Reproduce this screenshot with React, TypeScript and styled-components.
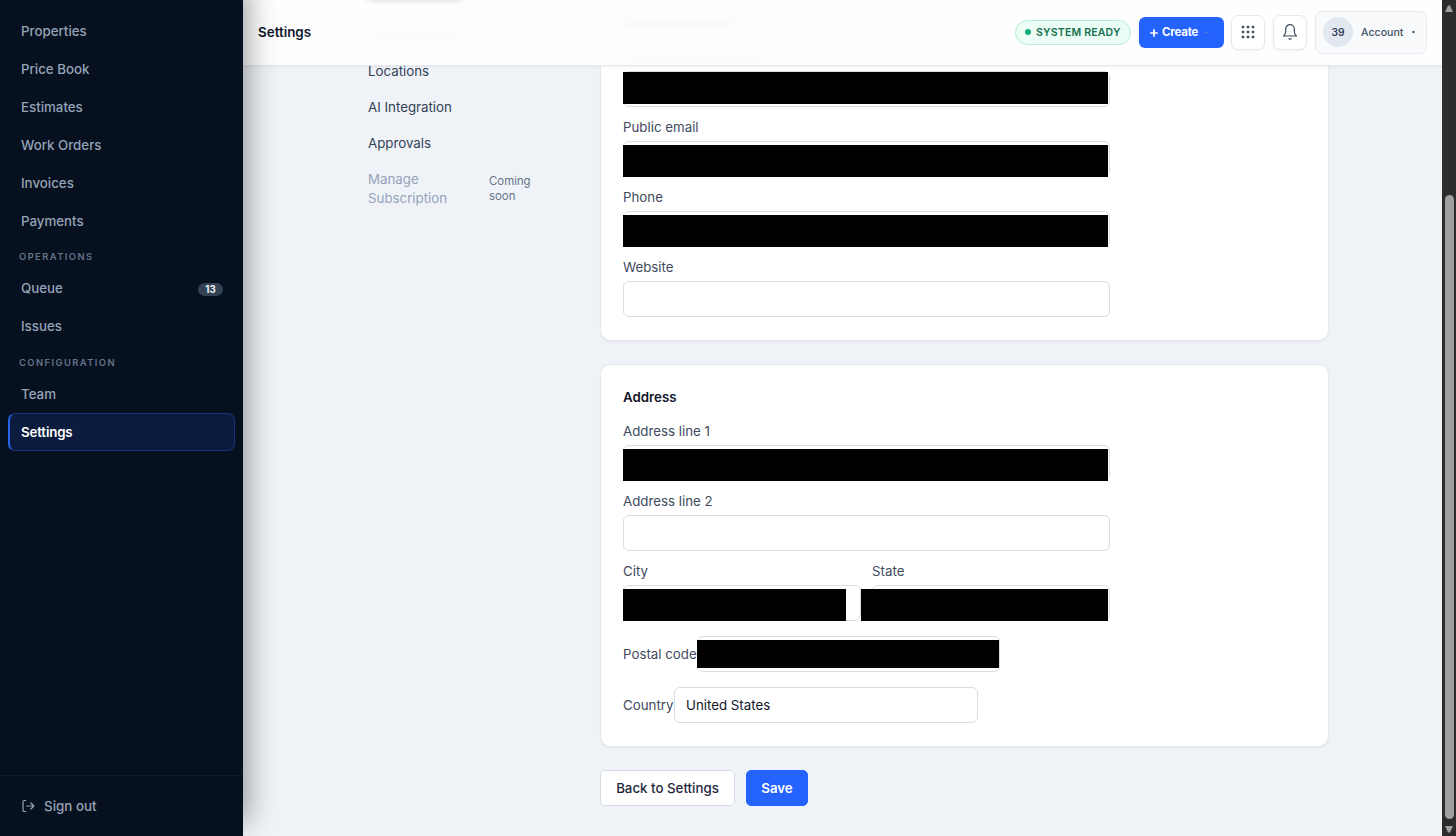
import React from 'react';
import styled, { createGlobalStyle, css } from 'styled-components';

const GlobalStyle = createGlobalStyle`
  *, *::before, *::after { box-sizing: border-box; }
  body {
    margin: 0;
    font-family: Inter, 'Liberation Sans', sans-serif;
    font-size: 13.3px;
    color: #0f172a;
    background: #eff3f8;
  }
  button, input { font-family: inherit; }
`;

const Shell = styled.div`
  display: grid;
  grid-template-columns: 243px 1fr 14px;
  height: 836px;
  overflow: hidden;
`;

/* Sidebar */

const Sidebar = styled.aside`
  position: relative;
  z-index: 2;
  display: flex;
  flex-direction: column;
  background: #06101e;
  box-shadow: 4px -14px 28px rgba(0, 0, 0, 0.4);
`;

const Nav = styled.nav`
  flex: 1;
  padding: 12px 8px 0;
`;

const NavItem = styled.a<{ $active?: boolean }>`
  display: flex;
  align-items: center;
  justify-content: space-between;
  height: 38px;
  padding: 0 11px 1px 12px;
  border: 1px solid transparent;
  border-radius: 7px;
  color: #94a3b8;
  font-size: 13.3px;
  font-weight: 500;
  ${({ $active }) =>
    $active &&
    css`
      padding-left: 11px;
      color: #fff;
      font-weight: 600;
      letter-spacing: -0.15px;
      background: #0c1c3f;
      border-color: #173372;
      border-left: 2px solid #2563eb;
    `}
`;

const NavSection = styled.div`
  height: 29.5px;
  padding: 11px 11px 0;
  color: #64748b;
  font-size: 9.4px;
  line-height: 12px;
  font-weight: 600;
  letter-spacing: 1.42px;
`;

const Count = styled.span`
  display: flex;
  align-items: center;
  justify-content: center;
  width: 25px;
  height: 13px;
  margin-top: 2px;
  border-radius: 7px;
  background: #334155;
  color: #f1f5f9;
  font-size: 9.7px;
  font-weight: 700;
`;

const SignOut = styled.button`
  display: flex;
  align-items: center;
  gap: 8px;
  height: 61px;
  padding: 0 21px 0;
  border: 0;
  border-top: 1px solid #111c2b;
  background: none;
  color: #94a3b8;
  font-size: 13.4px;
  font-weight: 500;
`;

/* Header */

const Main = styled.main`
  display: flex;
  flex-direction: column;
  min-width: 0;
  overflow: hidden;
`;

const Header = styled.header`
  position: relative;
  display: flex;
  flex: none;
  align-items: center;
  justify-content: space-between;
  height: 66px;
  padding: 0 15px 1px;
  background: #fefefe;
  border-bottom: 1px solid #e5e9ef;
  box-shadow: 0 1px 2px rgba(15, 23, 42, 0.06);
`;

const Haze = styled.span<{ $x: number; $y: number; $w: number; $h: number; $a: number }>`
  position: absolute;
  left: ${(p) => p.$x}px;
  top: ${(p) => p.$y}px;
  width: ${(p) => p.$w}px;
  height: ${(p) => p.$h}px;
  background: rgba(15, 23, 42, ${(p) => p.$a});
  filter: blur(3px);
`;

const HazeClip = styled.div`
  position: absolute;
  inset: 0;
  overflow: hidden;
`;

const PageTitle = styled.h1`
  margin: 0;
  font-size: 13.4px;
  font-weight: 600;
`;

const Actions = styled.div`
  position: relative;
  display: flex;
  align-items: center;
  gap: 8px;
`;

const Status = styled.div`
  display: flex;
  align-items: center;
  gap: 5px;
  width: 116px;
  height: 25px;
  padding-left: 9px;
  border: 1px solid #b4efd3;
  border-radius: 13px;
  background: #ebfdf5;
  color: #16704f;
  font-size: 10.5px;
  font-weight: 600;
  letter-spacing: 0.2px;
  white-space: nowrap;
`;

const Dot = styled.i`
  width: 6px;
  height: 6px;
  border-radius: 50%;
  background: #18aa78;
`;

const Create = styled.button`
  display: flex;
  align-items: center;
  gap: 4px;
  width: 85px;
  height: 31px;
  margin-right: -1px;
  padding: 0 0 0 11px;
  border: 0;
  border-radius: 6px;
  background: #2563ff;
  color: #fff;
  font-size: 11.4px;
  font-weight: 700;
  letter-spacing: -0.15px;
`;

const CreateCaret = styled.i`
  width: 5px;
  height: 1px;
  margin-left: 2px;
  background: #4a73e4;
`;

const IconButton = styled.button`
  display: flex;
  align-items: center;
  justify-content: center;
  width: 34px;
  height: 35px;
  padding: 0;
  border: 1px solid #e5e9f0;
  border-radius: 7px;
  background: #fff;
  color: #3f4b5f;
  box-shadow: 0 1px 2px rgba(15, 23, 42, 0.05);
`;

const Account = styled.button`
  display: flex;
  align-items: center;
  width: 112px;
  height: 43px;
  padding: 0 0 0 7px;
  border: 1px solid #e5e9f0;
  border-radius: 7px;
  background: #f8fafc;
  color: #475569;
  font-size: 10.6px;
  font-weight: 500;
`;

const Avatar = styled.span`
  display: flex;
  align-items: center;
  justify-content: center;
  width: 30px;
  height: 30px;
  margin-right: 8px;
  border-radius: 50%;
  background: #e2e8f0;
  color: #334155;
  font-size: 10.3px;
  font-weight: 600;
`;

const AccountCaret = styled.i`
  width: 3px;
  height: 2px;
  margin-left: 9px;
  border-radius: 1px;
  background: #5b6678;
`;

/* Content */

const Content = styled.div`
  display: grid;
  grid-template-columns: 196px 729px;
  column-gap: 52px;
  flex: 1;
  padding-left: 109px;
`;

const SubNav = styled.nav`
  display: flex;
  flex-direction: column;
  padding: 0 0 0 16px;
  margin-top: -13px;
  color: #334155;
`;

const SubNavLink = styled.a`
  display: flex;
  align-items: center;
  height: 36px;
`;

const SubNavDisabled = styled.div`
  display: grid;
  grid-template-columns: 121px 50px;
  align-items: center;
  height: 56px;
  color: #94a3b8;
  line-height: 19px;
`;

const Soon = styled.small`
  color: #64748b;
  font-size: 11.4px;
  line-height: 15px;
`;

const Form = styled.form`
  min-width: 0;
`;

const Card = styled.section<{ $cut?: boolean }>`
  width: 729px;
  height: 383px;
  margin-top: 23px;
  padding: 23px 22px 0;
  border: 1px solid #e6eaf0;
  border-radius: 11px;
  background: #fff;
  box-shadow: 0 1px 2px rgba(15, 23, 42, 0.05);
  ${({ $cut }) =>
    $cut &&
    css`
      height: 275px;
      margin-top: 0;
      padding-top: 5px;
      border-top: 0;
      border-radius: 0 0 11px 11px;
    `}
`;

const CardTitle = styled.h2`
  margin: 0 0 16px;
  font-size: 13.3px;
  line-height: 18px;
  font-weight: 600;
`;

const FieldColumn = styled.div`
  display: flex;
  flex-direction: column;
  gap: 11.1px;
  width: 487px;
`;

const Pair = styled.div`
  display: grid;
  grid-template-columns: 1fr 1fr;
  gap: 11px;
`;

const Field = styled.label<{ $inline?: boolean }>`
  display: flex;
  flex-direction: ${(p) => (p.$inline ? 'row' : 'column')};
  align-items: ${(p) => (p.$inline ? 'center' : 'stretch')};
  gap: ${(p) => (p.$inline ? 0 : 4)}px;
  ${(p) => p.$inline && 'margin-top: 4px;'}
  color: #414b5e;
  line-height: 19px;
`;

const LabelText = styled.span<{ $w?: number }>`
  ${(p) => p.$w && `width: ${p.$w}px;`}
  white-space: nowrap;
`;

const Control = styled.span<{ $w?: number }>`
  position: relative;
  display: block;
  height: 36px;
  ${(p) => p.$w && `width: ${p.$w}px;`}
`;

const Input = styled.input`
  display: block;
  width: 100%;
  height: 36px;
  padding: 0 11px;
  border: 1px solid #d8dce3;
  border-radius: 6px;
  background: #fff;
  color: #0f172a;
  font-size: 13.3px;
  outline: 0;
`;

const Redaction = styled.span<{ $left: number; $top: number; $w: number; $h: number }>`
  position: absolute;
  left: ${(p) => p.$left}px;
  top: ${(p) => p.$top}px;
  width: ${(p) => p.$w}px;
  height: ${(p) => p.$h}px;
  background: #000;
`;

const FormActions = styled.div`
  display: flex;
  gap: 11px;
  margin-top: 23px;
`;

const Button = styled.button<{ $primary?: boolean }>`
  width: ${(p) => (p.$primary ? 62 : 135)}px;
  height: 36px;
  padding: 0;
  border: 1px solid ${(p) => (p.$primary ? '#2563ff' : '#d3dae4')};
  border-radius: 5px;
  background: ${(p) => (p.$primary ? '#2563ff' : '#fff')};
  color: ${(p) => (p.$primary ? '#fff' : '#1e293b')};
  font-size: 13.3px;
  font-weight: ${(p) => (p.$primary ? 600 : 500)};
`;

/* Scroll bar */

const ScrollTrack = styled.div`
  display: flex;
  flex-direction: column;
  align-items: center;
  justify-content: space-between;
  padding: 5px 0 3px;
  background: #2c2c2c;
`;

const ScrollThumb = styled.div`
  width: 9px;
  height: 624px;
  margin: auto 0 7px;
  border-radius: 5px;
  background: #9f9f9f;
`;

type Cover = { left?: number; top: number; w: number; h?: number };

function FormField(props: {
  label: string;
  value?: string;
  cover?: Cover;
  inline?: boolean;
  labelWidth?: number;
  width?: number;
}) {
  const { label, value, cover, inline, labelWidth, width } = props;
  return (
    <Field $inline={inline}>
      {label && <LabelText $w={labelWidth}>{label}</LabelText>}
      <Control $w={width}>
        <Input defaultValue={value} />
        {cover && (
          <Redaction $left={cover.left ?? 0} $top={cover.top} $w={cover.w} $h={cover.h ?? 32} />
        )}
      </Control>
    </Field>
  );
}

const SignOutIcon = () => (
  <svg width="15" height="14" viewBox="0 0 15 14" fill="none" stroke="currentColor" strokeWidth="1.2" strokeLinecap="round" strokeLinejoin="round">
    <path d="M4.8 1.5H3.3A1.3 1.3 0 0 0 2 2.8v8.4a1.3 1.3 0 0 0 1.3 1.3h1.5M5.8 7h7M9.9 4l3 3-3 3" />
  </svg>
);

const GridIcon = () => (
  <svg width="14" height="14" viewBox="0 0 14 14" fill="currentColor">
    {[0.7, 5.7, 10.7].map((y) =>
      [0.7, 5.7, 10.7].map((x) => <rect key={`${x}-${y}`} x={x} y={y} width="2.6" height="2.6" rx="0.8" />),
    )}
  </svg>
);

const BellIcon = () => (
  <svg width="16" height="18" viewBox="0 0 16 18" fill="none" stroke="currentColor" strokeWidth="1.2" strokeLinecap="round" strokeLinejoin="round">
    <path d="M8 1.7a4.3 4.3 0 0 0-4.300 4.300v2.700c0 1.800-.8 3-2.200 4.300h13c-1.400-1.300-2.200-2.500-2.200-4.300V6A4.300 4.300 0 0 0 8 1.700ZM7 15.700q1 .8 2 0" />
  </svg>
);

const PlusIcon = () => (
  <svg width="8" height="9" viewBox="0 0 8 9" stroke="currentColor" strokeWidth="1.7">
    <path d="M4 1.200v7.500M.2 5h7.600" />
  </svg>
);

const Arrow = ({ down }: { down?: boolean }) => (
  <svg width="8" height="7" viewBox="0 0 8 7" fill="#9f9f9f">
    <path d={down ? 'M0 0h8L5 6.500H3Z' : 'M3 .5h2L8 7H0Z'} />
  </svg>
);

export default function App() {
  return (
    <Shell>
      <GlobalStyle />
      <Sidebar>
        <Nav>
          {['Properties', 'Price Book', 'Estimates', 'Work Orders', 'Invoices', 'Payments'].map((t) => (
            <NavItem key={t}>{t}</NavItem>
          ))}
          <NavSection>OPERATIONS</NavSection>
          <NavItem>
            Queue <Count>13</Count>
          </NavItem>
          <NavItem>Issues</NavItem>
          <NavSection>CONFIGURATION</NavSection>
          <NavItem>Team</NavItem>
          <NavItem $active>Settings</NavItem>
        </Nav>
        <SignOut>
          <SignOutIcon />
          Sign out
        </SignOut>
      </Sidebar>

      <Main>
        <Header>
          <HazeClip aria-hidden>
            <Haze $x={125} $y={-6} $w={94} $h={5} $a={0.25} />
            <Haze $x={126} $y={32} $w={96} $h={6} $a={0.012} />
            <Haze $x={380} $y={19} $w={110} $h={9} $a={0.022} />
            <Haze $x={380} $y={56} $w={144} $h={6} $a={0.012} />
          </HazeClip>
          <PageTitle>Settings</PageTitle>
          <Actions>
            <Status>
              <Dot />
              SYSTEM READY
            </Status>
            <Create>
              <PlusIcon />
              Create
              <CreateCaret />
            </Create>
            <IconButton aria-label="Apps">
              <GridIcon />
            </IconButton>
            <IconButton aria-label="Notifications">
              <BellIcon />
            </IconButton>
            <Account>
              <Avatar>39</Avatar>
              Account
              <AccountCaret />
            </Account>
          </Actions>
        </Header>

        <Content>
          <SubNav>
            <SubNavLink>Locations</SubNavLink>
            <SubNavLink>AI Integration</SubNavLink>
            <SubNavLink>Approvals</SubNavLink>
            <SubNavDisabled>
              Manage Subscription
              <Soon>Coming soon</Soon>
            </SubNavDisabled>
          </SubNav>

          <Form>
            <Card $cut>
              <FieldColumn>
                <FormField label="" cover={{ top: 1, w: 485 }} />
                <FormField label="Public email" cover={{ top: 4, w: 485 }} />
                <FormField label="Phone" cover={{ top: 4, w: 485 }} />
                <FormField label="Website" />
              </FieldColumn>
            </Card>
            <Card>
              <CardTitle>Address</CardTitle>
              <FieldColumn>
                <FormField label="Address line 1" cover={{ top: 4, w: 485 }} />
                <FormField label="Address line 2" />
                <Pair>
                  <FormField label="City" cover={{ top: 4, w: 223 }} />
                  <FormField label="State" cover={{ left: -11, top: 4, w: 247 }} />
                </Pair>
                <FormField inline label="Postal code" labelWidth={74} width={303} cover={{ top: 4, w: 302, h: 28 }} />
                <FormField inline label="Country" labelWidth={51} width={304} value="United States" />
              </FieldColumn>
            </Card>
            <FormActions>
              <Button type="button">Back to Settings</Button>
              <Button type="button" $primary>
                Save
              </Button>
            </FormActions>
          </Form>
        </Content>
      </Main>

      <ScrollTrack>
        <Arrow />
        <ScrollThumb />
        <Arrow down />
      </ScrollTrack>
    </Shell>
  );
}
